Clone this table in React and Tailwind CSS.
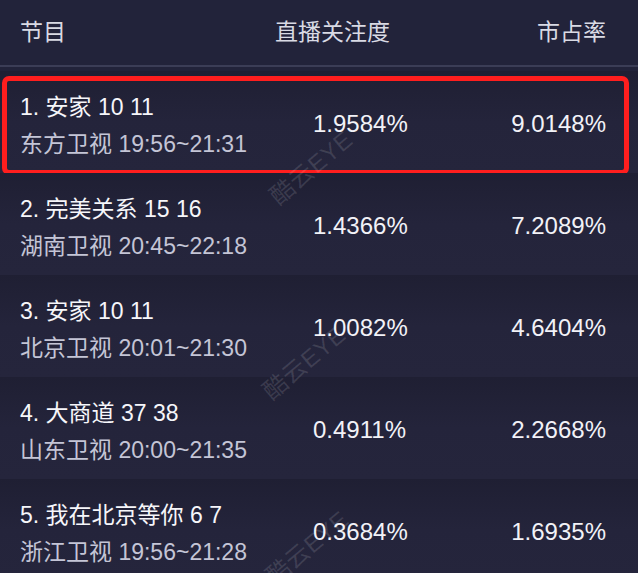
const rows = [
  { title: '1. 安家 10 11', sub: '东方卫视 19:56~21:31', rate: '1.9584%', share: '9.0148%' },
  { title: '2. 完美关系 15 16', sub: '湖南卫视 20:45~22:18', rate: '1.4366%', share: '7.2089%' },
  { title: '3. 安家 10 11', sub: '北京卫视 20:01~21:30', rate: '1.0082%', share: '4.6404%' },
  { title: '4. 大商道 37 38', sub: '山东卫视 20:00~21:35', rate: '0.4911%', share: '2.2668%' },
  { title: '5. 我在北京等你 6 7', sub: '浙江卫视 19:56~21:28', rate: '0.3684%', share: '1.6935%' },
];

function Watermark({ className }) {
  return (
    <div
      className={`pointer-events-none absolute -rotate-[40deg] text-[24px] tracking-wide text-white/[0.12] ${className}`}
    >
      酷云EYE
    </div>
  );
}

export default function App() {
  return (
    <div
      className="relative h-[573px] w-[638px] overflow-hidden bg-[#22233a]"
      style={{ fontFamily: '"Liberation Sans", "Noto Sans CJK SC", sans-serif' }}
    >
      {/* 表头 */}
      <div className="flex h-[65px] items-center pl-5 pr-8 text-[23px] text-[#d9dae4]">
        <div className="w-[255px]">节目</div>
        <div>直播关注度</div>
        <div className="ml-auto">市占率</div>
      </div>
      <div className="h-[2px] bg-[#3b3d56]" />

      <div className="pt-1">
        {rows.map((r, i) => (
          <div
            key={i}
            className="relative flex h-[102px] items-center bg-gradient-to-b from-[#1f1f33] via-[#24243b] to-[#25253c] pl-5 pr-8 pt-1"
          >
            <div className="w-[293px] pt-[3px]">
              <div className="text-[23px] leading-[37px] text-[#f6f6fa]">{r.title}</div>
              <div className="text-[23px] leading-[37px] text-[#c4c5d6]">{r.sub}</div>
            </div>
            <div className="text-[24px] text-[#f2f2f7]">{r.rate}</div>
            <div className="ml-auto text-[24px] text-[#f2f2f7]">{r.share}</div>
            {i === 0 && (
              <div className="pointer-events-none absolute left-[2px] top-[5px] h-[99px] w-[627px] rounded-[7px] border-[5px] border-[#ff1e1e]" />
            )}
          </div>
        ))}
      </div>

      <Watermark className="left-[262px] top-[150px]" />
      <Watermark className="left-[255px] top-[345px]" />
      <Watermark className="left-[258px] top-[530px]" />
    </div>
  );
}
